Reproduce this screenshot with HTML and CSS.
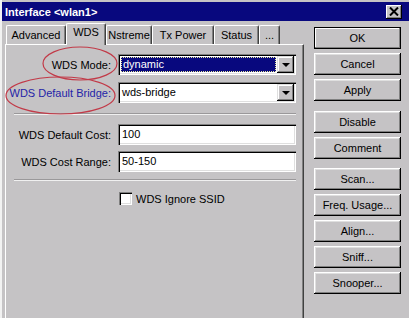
FILE: index.html
```html
<!DOCTYPE html>
<html lang="en">
<head>
    <meta charset="UTF-8">
    <title>Interface &lt;wlan1&gt;</title>
    <link rel="stylesheet" href="styles.css">
</head>
<body>
    <div class="window">
        <div class="titlebar">
            <span class="title">Interface &lt;wlan1&gt;</span>
            <span class="close">
                <svg width="10" height="9" viewBox="0 0 10 9"><path d="M1 0.5 L9 8.5 M9 0.5 L1 8.5" stroke="#000" stroke-width="2"/></svg>
            </span>
        </div>

        <div class="content">
            <div class="left">
                <div class="tabs">
                    <div class="tab w-adv">Advanced</div>
                    <div class="tab w-wds active">WDS</div>
                    <div class="tab w-nst">Nstreme</div>
                    <div class="tab w-tx">Tx Power</div>
                    <div class="tab w-st">Status</div>
                    <div class="tab w-more">...</div>
                </div>
                <div class="panel">
                    <div class="row">
                        <label class="lbl">WDS Mode:</label>
                        <div class="combo">
                            <div class="combo-value"><span class="selected">dynamic</span></div>
                            <div class="combo-btn"><span class="arrow"></span></div>
                        </div>
                    </div>
                    <div class="row gap7">
                        <label class="lbl blue">WDS Default Bridge:</label>
                        <div class="combo">
                            <div class="combo-value">wds-bridge</div>
                            <div class="combo-btn"><span class="arrow"></span></div>
                        </div>
                    </div>
                    <div class="sep sep1"></div>
                    <div class="row">
                        <label class="lbl">WDS Default Cost:</label>
                        <div class="field">100</div>
                    </div>
                    <div class="row gap6">
                        <label class="lbl">WDS Cost Range:</label>
                        <div class="field">50-150</div>
                    </div>
                    <div class="sep sep2"></div>
                    <div class="check-row">
                        <span class="checkbox"></span>
                        <span>WDS Ignore SSID</span>
                    </div>
                </div>
            </div>

            <div class="buttons">
                <div class="btn default">OK</div>
                <div class="btn">Cancel</div>
                <div class="btn">Apply</div>
                <div class="btn group">Disable</div>
                <div class="btn">Comment</div>
                <div class="btn group2">Scan...</div>
                <div class="btn">Freq. Usage...</div>
                <div class="btn">Align...</div>
                <div class="btn">Sniff...</div>
                <div class="btn">Snooper...</div>
            </div>
        </div>

        <!-- red marks drawn over the dialog -->
        <svg class="marks" width="409" height="318" viewBox="0 0 409 318">
            <ellipse cx="80" cy="63.5" rx="37" ry="16.5" fill="none" stroke="#c23a48" stroke-width="1.2"/>
            <ellipse cx="60.5" cy="95.5" rx="54.5" ry="18.5" fill="none" stroke="#c23a48" stroke-width="1.2"/>
        </svg>
    </div>
</body>
</html>
```

FILE: styles.css
```css
body {
    margin: 0;
    background: #c5c3c5;
    font-family: "Liberation Sans", Arial, sans-serif;
    font-size: 11px;
    color: #000;
}

.window {
    position: relative;
    width: 409px;
    height: 318px;
    overflow: hidden;
    box-sizing: border-box;
    padding-top: 2px;
    border-left: 2px solid #f2f2f2;
}

.titlebar {
    height: 19px;
    background: #08087e;
    color: #fff;
    display: flex;
    align-items: center;
    justify-content: space-between;
    padding: 0 7px 0 3px;
}

.title {
    font-weight: bold;
    font-size: 11px;
}

.close {
    width: 16px;
    height: 14px;
    box-sizing: border-box;
    background: #c5c3c5;
    box-shadow: inset -1px -1px 0 #000, inset 1px 1px 0 #fff, inset -2px -2px 0 #808080;
    display: flex;
    align-items: center;
    justify-content: center;
}

.close svg {
    display: block;
}

.content {
    display: flex;
    padding-top: 2px;
}

.left {
    width: 299px;
    margin-left: 3px;
}

/* tabs */
.tabs {
    display: flex;
    align-items: flex-end;
    height: 21px;
    padding-left: 1px;
}

.tab {
    height: 19px;
    box-sizing: border-box;
    border-top: 1px solid #fff;
    border-left: 1px solid #fff;
    border-right: 1px solid #404040;
    border-radius: 2px 2px 0 0;
    box-shadow: inset -1px 0 0 #808080;
    text-align: center;
    line-height: 18px;
    position: relative;
}

.tab.active {
    height: 22px;
    margin-bottom: -1px;
    background: #c5c3c5;
    z-index: 1;
    line-height: 17px;
}

.w-adv { width: 60px; }
.w-wds { width: 40px; }
.w-nst { width: 46px; }
.w-tx { width: 62px; }
.w-st { width: 45px; }
.w-more { width: 21px; }

.panel {
    height: 300px;
    box-sizing: border-box;
    border-top: 1px solid #fff;
    border-left: 1px solid #fff;
    border-right: 1px solid #404040;
    box-shadow: inset -1px 0 0 #808080;
    padding: 9px 7px 0 8px;
}

.row {
    display: flex;
    align-items: center;
}

.gap7 { margin-top: 7px; }
.gap6 { margin-top: 6px; }

.lbl {
    flex: none;
    width: 97px;
    margin-right: 7px;
    display: flex;
    justify-content: flex-end;
    white-space: nowrap;
}

.lbl.blue {
    color: #2424a8;
}

.combo, .field {
    width: 178px;
    height: 21px;
    box-sizing: border-box;
    background: #fff;
    box-shadow: inset 1px 1px 0 #808080, inset 2px 2px 0 #000, inset -1px -1px 0 #fff, inset -2px -2px 0 #dfdfdf;
}

.field {
    padding: 0 4px;
    line-height: 21px;
}

.combo {
    display: flex;
    padding: 2px;
}

.combo-value {
    flex: 1;
    line-height: 17px;
    padding-left: 2px;
}

.selected {
    display: block;
    margin: 1px 1px 1px -1px;
    height: 15px;
    line-height: 15px;
    background: #08087e;
    color: #fff;
    outline: 1px dotted #e8e8a0;
    outline-offset: -1px;
    padding-left: 2px;
}

.combo-btn {
    width: 17px;
    height: 17px;
    box-sizing: border-box;
    background: #c5c3c5;
    box-shadow: inset -1px -1px 0 #000, inset 1px 1px 0 #dfdfdf, inset -2px -2px 0 #808080, inset 2px 2px 0 #fff;
    display: flex;
    align-items: center;
    justify-content: center;
}

.arrow {
    width: 0;
    height: 0;
    border-left: 4px solid transparent;
    border-right: 4px solid transparent;
    border-top: 4px solid #000;
}

.sep {
    border-top: 1px solid #9a989a;
    border-bottom: 1px solid #f0f0f0;
    height: 0;
}

.sep1 { margin: 10px 0 9px; }
.sep2 { margin: 7px 0 11px; }

.check-row {
    display: flex;
    align-items: center;
    padding-left: 105px;
}

.checkbox {
    width: 13px;
    height: 13px;
    box-sizing: border-box;
    background: #fff;
    box-shadow: inset 1px 1px 0 #808080, inset 2px 2px 0 #000, inset -1px -1px 0 #fff, inset -2px -2px 0 #dfdfdf;
    margin-right: 4px;
}

/* right column */
.buttons {
    width: 87px;
    margin-left: 10px;
    padding-top: 4px;
    display: flex;
    flex-direction: column;
    gap: 4px;
}

.btn {
    height: 22px;
    box-sizing: border-box;
    text-align: center;
    line-height: 22px;
    box-shadow: inset -1px -1px 0 #000, inset 1px 1px 0 #fff, inset -2px -2px 0 #808080, inset 2px 2px 0 #dfdfdf;
}

.btn.default {
    box-shadow: inset 0 0 0 1px #000, inset -2px -2px 0 #808080, inset 2px 2px 0 #fff;
}

.btn.group { margin-top: 6px; }
.btn.group2 { margin-top: 5px; }

.marks {
    position: absolute;
    left: -2px;
    top: 0;
    pointer-events: none;
}
```
